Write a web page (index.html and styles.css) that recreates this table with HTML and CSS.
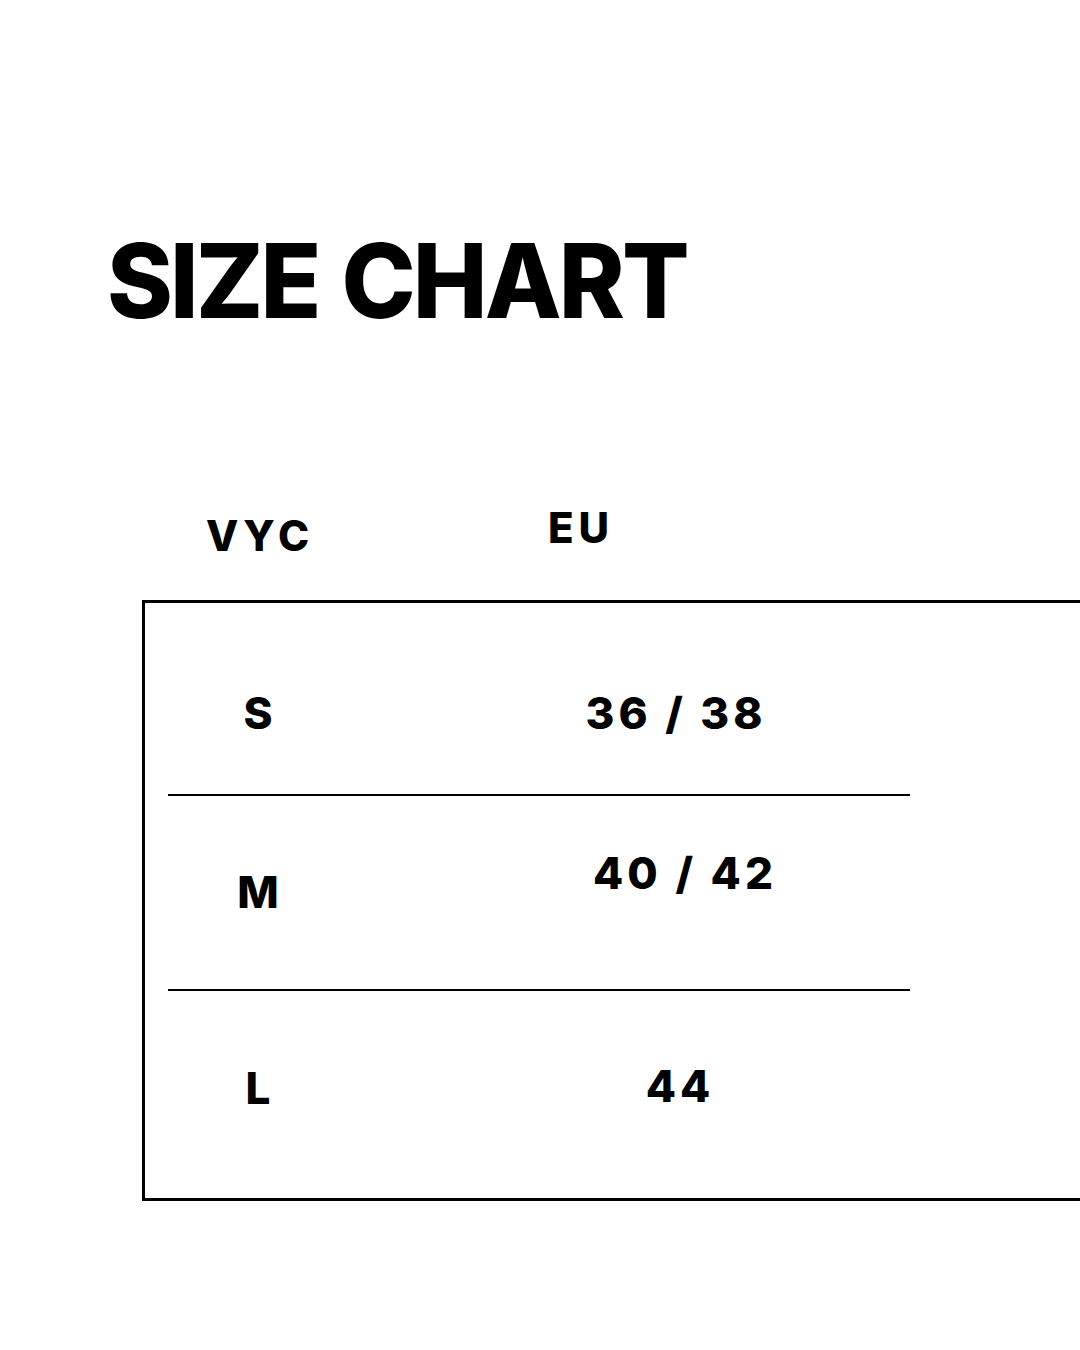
FILE: index.html
```html
<!DOCTYPE html>
<html lang="en">
<head>
<meta charset="utf-8">
<title>Size Chart</title>
<link rel="stylesheet" href="styles.css">
</head>
<body>
<main class="page">
  <h1 class="title">SIZE CHART</h1>
  <div class="heads">
    <div class="head head--vyc">VYC</div>
    <div class="head head--eu">EU</div>
  </div>
  <section class="chart">
    <div class="row row--1">
      <div class="cell cell--size c1">S</div>
      <div class="cell cell--eu c1 c1b">36 / 38</div>
    </div>
    <div class="rule"></div>
    <div class="row row--2">
      <div class="cell cell--size c2a">M</div>
      <div class="cell cell--eu c2b">40 / 42</div>
    </div>
    <div class="rule"></div>
    <div class="row row--3">
      <div class="cell cell--size c3a">L</div>
      <div class="cell cell--eu c3b">44</div>
    </div>
  </section>
</main>
</body>
</html>
```

FILE: styles.css
```css
html, body {
  margin: 0;
  padding: 0;
  background: #ffffff;
  overflow: hidden;
}

.page {
  width: 1080px;
  height: 1350px;
  overflow: hidden;
  font-family: Inter, "Liberation Sans", sans-serif;
  color: #000;
  padding-top: 229px;
  box-sizing: border-box;
}

.title {
  margin: 0 0 0 107px;
  font-size: 103px;
  line-height: 103px;
  font-weight: 800;
  letter-spacing: -3px;
  word-spacing: 4px;
  transform: scaleX(0.97);
  transform-origin: left center;
}

.heads {
  margin-top: 175px;
  display: flex;
  align-items: flex-start;
  height: 93px;
}

.head {
  font-size: 42px;
  line-height: 42px;
  font-weight: 800;
  letter-spacing: 5px;
}

.head--vyc {
  margin-left: 206px;
  margin-top: 8px;
  width: 342px;
}

.head--eu {
  margin-top: 0;
}

.chart {
  margin-left: 142px;
  width: 1000px;
  border: 3px solid #000;
  border-right: none;
}

.row {
  display: grid;
  grid-template-columns: 226px 614px;
  align-items: start;
}

.row--1 { height: 191px; }
.row--2 { height: 193px; }
.row--3 { height: 207px; }

.rule {
  margin-left: 23px;
  width: 742px;
  height: 2px;
  background: #000;
}

.cell {
  font-size: 44px;
  line-height: 44px;
  font-weight: 800;
  text-align: center;
}

.cell--eu {
  letter-spacing: 4px;
  text-indent: 4px;
}

.c1 { padding-top: 88px; }
.c1b { padding-right: 8px; }
.c2a { padding-top: 74px; }
.c2b { padding-top: 55px; padding-left: 10px; }
.c3a { padding-top: 75px; }
.c3b { padding-top: 73px; }
```
